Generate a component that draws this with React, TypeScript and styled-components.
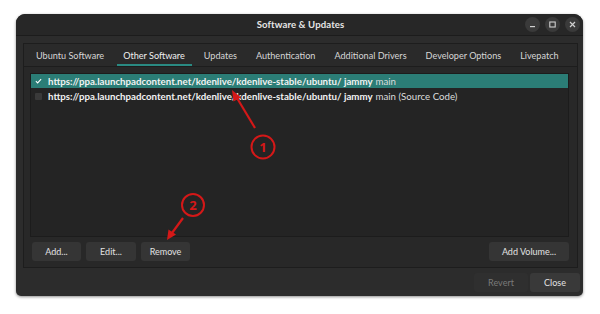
import React from "react";
import styled, { createGlobalStyle } from "styled-components";

const Global = createGlobalStyle`
  html, body { margin: 0; padding: 0; background: #ffffff; }
  body { width: 600px; height: 314px; overflow: hidden; font-family: Lato, "Noto Sans", "DejaVu Sans", sans-serif; }
  #root { position: relative; width: 600px; height: 314px; padding-top: 14px; box-sizing: border-box; }
`;

const Window = styled.div`
  margin-left: 16px;
  width: 567px;
  height: 282px;
  background: #2c2c2c;
  border-radius: 9px 9px 5px 5px;
  box-shadow: 0 1px 3px rgba(0,0,0,0.45);
  display: flex;
  flex-direction: column;
  overflow: hidden;
`;

const TitleBar = styled.div`
  height: 21px;
  flex: none;
  background: #272727;
  border-bottom: 1px solid #1c1c1c;
  display: flex;
  align-items: center;
  justify-content: center;
  position: relative;
`;

const Title = styled.div`
  color: #e6e6e6;
  font-size: 9.6px;
  font-weight: 700;
  margin-left: 2px;
  letter-spacing: 0.1px;
`;

const Controls = styled.div`
  position: absolute;
  right: 3px;
  top: 3px;
  display: flex;
  gap: 5px;
`;

const Ctl = styled.div`
  width: 15px;
  height: 15px;
  border-radius: 50%;
  background: #3a3a3a;
  display: flex;
  align-items: center;
  justify-content: center;
`;

const Body = styled.div`
  flex: 1;
  display: flex;
  flex-direction: column;
  padding: 7px 5px 4px 7px;
`;

const Notebook = styled.div`
  height: 225px;
  border: 1px solid #1d1d1d;
  background: #282828;
  display: flex;
  flex-direction: column;
  box-sizing: border-box;
`;

const Tabs = styled.div`
  height: 22px;
  flex: none;
  display: flex;
  align-items: stretch;
  border-bottom: 1px solid #1d1d1d;
  padding-left: 2.5px;
  background: #2a2a2a;
`;

const Tab = styled.div<{ $active?: boolean }>`
  position: relative;
  padding: 0 9.5px;
  font-size: 9.1px;
  white-space: nowrap;
  color: ${(p) => (p.$active ? "#f0f0f0" : "#d6d6d6")};
  display: flex;
  align-items: center;
  &::after {
    content: "";
    display: ${(p) => (p.$active ? "block" : "none")};
    position: absolute;
    left: 3px;
    right: 2px;
    bottom: 0;
    height: 2px;
    background: #2a8a82;
  }
`;

const Page = styled.div`
  flex: 1;
  display: flex;
  flex-direction: column;
  padding: 6px 8px 7px 6px;
  gap: 5px;
`;

const List = styled.div`
  height: 164px;
  background: #242424;
  border: 1px solid #1c1c1c;
  display: flex;
  flex-direction: column;
  box-sizing: border-box;
`;

const Row = styled.div<{ $selected?: boolean }>`
  height: 14px;
  display: flex;
  align-items: center;
  background: ${(p) => (p.$selected ? "#2b7d76" : "transparent")};
  color: #f2f2f2;
  font-size: 9.7px;
  white-space: nowrap;
  margin-bottom: 1px;
`;

const Check = styled.div<{ $on?: boolean }>`
  width: 7px;
  height: 7px;
  margin: 0 6px 0 4px;
  border-radius: 1px;
  background: ${(p) => (p.$on ? "transparent" : "#3a3a3a")};
  display: flex;
  align-items: center;
  justify-content: center;
`;

const Url = styled.span`
  font-weight: 700;
`;

const Plain = styled.span`
  color: #dcdcdc;
  margin-left: 3px;
`;

const ButtonRow = styled.div`
  display: flex;
  gap: 5px;
  padding-left: 2px;
`;

const Btn = styled.div<{ $w: number; $dim?: boolean; $bg?: string }>`
  width: ${(p) => p.$w}px;
  height: 19px;
  box-sizing: border-box;
  border-radius: 3px;
  background: ${(p) => p.$bg || "#353535"};
  color: ${(p) => (p.$dim ? "#7a7a7a" : "#e2e2e2")};
  font-size: 9px;
  display: flex;
  align-items: center;
  justify-content: center;
`;

const Spacer = styled.div`
  flex: 1;
`;

const Footer = styled.div`
  display: flex;
  justify-content: flex-end;
  gap: 2px;
  margin-top: 5px;
  margin-right: -2px;
`;

const Overlay = styled.svg`
  position: absolute;
  left: 0;
  top: 0;
  pointer-events: none;
`;

const AnnoText = styled.text`
  font-family: "Noto Sans", "DejaVu Sans", sans-serif;
  font-weight: 700;
  font-size: 13px;
  fill: #d41818;
`;

const tabs = [
  "Ubuntu Software",
  "Other Software",
  "Updates",
  "Authentication",
  "Additional Drivers",
  "Developer Options",
  "Livepatch",
];

export default function App() {
  return (
    <>
      <Global />
      <Window>
        <TitleBar>
          <Title>Software &amp; Updates</Title>
          <Controls>
            <Ctl>
              <svg width="7" height="7" viewBox="0 0 7 7">
                <rect x="1" y="5" width="5" height="1.2" fill="#cfcfcf" />
              </svg>
            </Ctl>
            <Ctl>
              <svg width="7" height="7" viewBox="0 0 7 7">
                <rect x="0.8" y="1" width="5.4" height="5" fill="none" stroke="#cfcfcf" strokeWidth="1.1" />
              </svg>
            </Ctl>
            <Ctl>
              <svg width="7" height="7" viewBox="0 0 7 7">
                <path d="M1 1L6 6M6 1L1 6" stroke="#cfcfcf" strokeWidth="1.2" />
              </svg>
            </Ctl>
          </Controls>
        </TitleBar>
        <Body>
          <Notebook>
            <Tabs>
              {tabs.map((t) => (
                <Tab key={t} $active={t === "Other Software"}>
                  {t}
                </Tab>
              ))}
            </Tabs>
            <Page>
              <List>
                <Row $selected>
                  <Check $on>
                    <svg width="8" height="8" viewBox="0 0 8 8">
                      <path d="M1 4.2L3 6.2L7 1.8" fill="none" stroke="#ffffff" strokeWidth="1.2" />
                    </svg>
                  </Check>
                  <Url>https://ppa.launchpadcontent.net/kdenlive/kdenlive-stable/ubuntu/ jammy</Url>
                  <Plain>main</Plain>
                </Row>
                <Row>
                  <Check />
                  <Url>https://ppa.launchpadcontent.net/kdenlive/kdenlive-stable/ubuntu/ jammy</Url>
                  <Plain>main (Source Code)</Plain>
                </Row>
              </List>
              <ButtonRow>
                <Btn $w={49}>Add...</Btn>
                <Btn $w={50}>Edit...</Btn>
                <Btn $w={49}>Remove</Btn>
                <Spacer />
                <Btn $w={80}>Add Volume...</Btn>
              </ButtonRow>
            </Page>
          </Notebook>
          <Footer>
            <Btn $w={54} $dim $bg="#2f2f2f">Revert</Btn>
            <Btn $w={50} $bg="#393939">Close</Btn>
          </Footer>
        </Body>
      </Window>
      <Overlay width="600" height="314" viewBox="0 0 600 314">
        <line x1="255" y1="128" x2="237" y2="98" stroke="#d41818" strokeWidth="2.2" />
        <path d="M232 90L241 97.5L233.5 101.5Z" fill="#d41818" />
        <circle cx="263" cy="147" r="11.5" fill="none" stroke="#d41818" strokeWidth="2" />
        <AnnoText x="263" y="151.5" textAnchor="middle">1</AnnoText>
        <line x1="183" y1="218" x2="172" y2="233" stroke="#d41818" strokeWidth="2.2" />
        <path d="M167 240L168.5 229.5L176 234.5Z" fill="#d41818" />
        <circle cx="193" cy="205" r="11" fill="none" stroke="#d41818" strokeWidth="2" />
        <AnnoText x="193" y="209.5" textAnchor="middle">2</AnnoText>
      </Overlay>
    </>
  );
}
